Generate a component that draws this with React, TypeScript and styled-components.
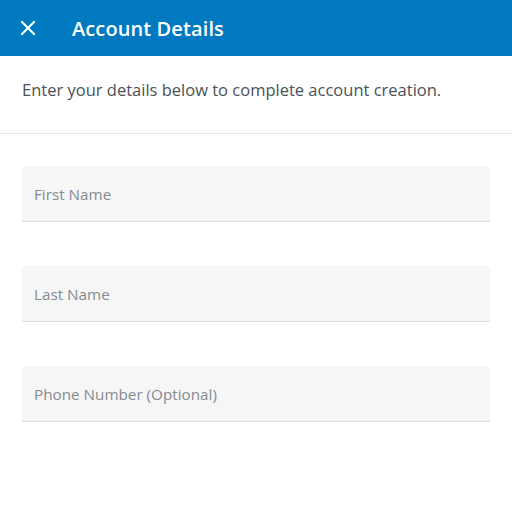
import React from 'react'
import styled, { createGlobalStyle } from 'styled-components'

const GlobalStyle = createGlobalStyle`
  html, body {
    margin: 0;
    padding: 0;
    background: #ffffff;
    font-family: "Open Sans", "Noto Sans", sans-serif;
  }
`

const Page = styled.div`
  width: 512px;
  min-height: 512px;
  background: #ffffff;
`

const TopBar = styled.header`
  height: 56px;
  background: #0079c1;
  display: flex;
  align-items: center;
  padding: 0 20px;
  box-sizing: border-box;
`

const CloseButton = styled.button`
  width: 16px;
  height: 16px;
  padding: 0;
  border: 0;
  background: none;
  display: flex;
  align-items: center;
  justify-content: center;
  cursor: pointer;
`

const Title = styled.h1`
  margin: 0 0 0 36px;
  color: #ffffff;
  font-size: 20px;
  font-weight: 600;
  letter-spacing: 0.1px;
`

const Intro = styled.p`
  margin: 0;
  padding: 22px 22px 0;
  height: 78px;
  box-sizing: border-box;
  border-bottom: 1px solid #e6e6e6;
  color: #4b5157;
  font-size: 16.5px;
  line-height: 24px;
`

const Form = styled.form`
  display: flex;
  flex-direction: column;
  gap: 44px;
  padding: 32px 22px 0;
`

const Field = styled.input`
  height: 56px;
  box-sizing: border-box;
  border: 0;
  border-bottom: 1px solid #dcdcdc;
  border-radius: 4px 4px 0 0;
  background: #f6f6f6;
  padding: 0 12px;
  font-family: inherit;
  font-size: 15.25px;
  color: #333;
  outline: none;

  &::placeholder {
    color: #858b92;
  }
`

const App = () => {
  return (
    <Page>
      <GlobalStyle />
      <TopBar>
        <CloseButton aria-label="Close">
          <svg width="16" height="16" viewBox="0 0 16 16">
            <path d="M2 2L14 14M14 2L2 14" stroke="#fff" strokeWidth="2" strokeLinecap="square" />
          </svg>
        </CloseButton>
        <Title>Account Details</Title>
      </TopBar>
      <Intro>Enter your details below to complete account creation.</Intro>
      <Form>
        <Field placeholder="First Name" />
        <Field placeholder="Last Name" />
        <Field placeholder="Phone Number (Optional)" />
      </Form>
    </Page>
  )
}

export default App
